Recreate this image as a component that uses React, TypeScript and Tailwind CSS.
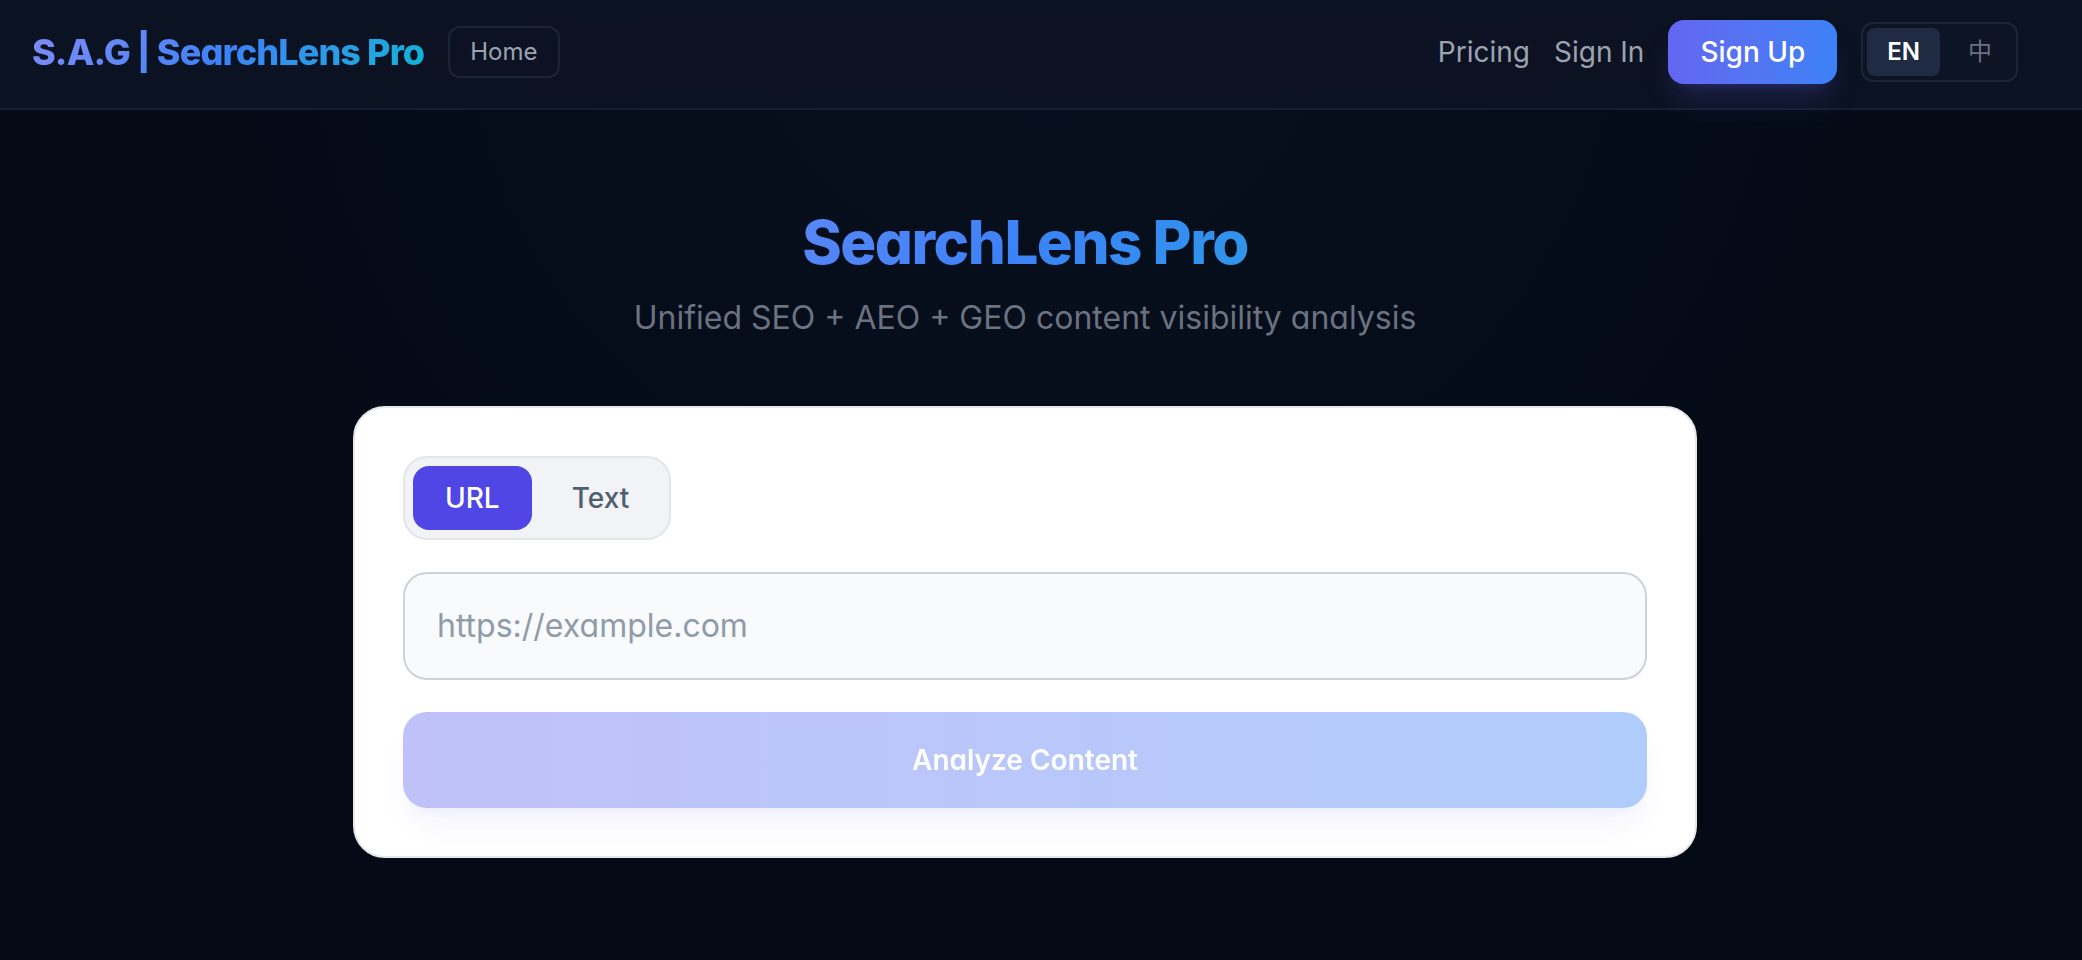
import { useState } from "react";
import clsx from "clsx";

const LANGS = [
    { id: "en", label: "EN" },
    { id: "zh", label: "中" },
];

const MODES = [
    { id: "url", label: "URL" },
    { id: "text", label: "Text" },
];

export default function App() {
    const [lang, setLang] = useState("en");
    const [mode, setMode] = useState("url");
    const [value, setValue] = useState("");

    return (
        <div className="min-h-screen bg-[#040b17] bg-[radial-gradient(ellipse_at_top,#080f1e_0%,#040b17_60%)] font-[Inter,'Noto_Sans_CJK_SC',sans-serif] [font-feature-settings:'cv11'] antialiased">
            {/* ─── Header ─── */}
            <header className="flex items-center justify-between border-b-2 border-[#161e36] bg-[#0b1221] bg-[radial-gradient(ellipse_at_center,#0e1225_0%,#0b1221_60%)] pt-5 pr-16 pb-6 pl-8">
                <div className="flex items-center gap-6">
                    <a
                        href="#"
                        className="bg-linear-135 from-[#818cf8] via-[#3b82f6] to-[#06b6d4] bg-clip-text text-[36px] leading-[56px] font-extrabold tracking-tight text-transparent"
                    >
                        S.A.G | SearchLens Pro
                    </a>
                    <a
                        href="#"
                        className="rounded-xl border-2 border-[#1b2536] px-5 py-2 text-2xl text-[#9ca3af]"
                    >
                        Home
                    </a>
                </div>

                <nav className="flex items-center gap-6 text-[28px] leading-10">
                    <a href="#" className="text-[#9ca3af]">Pricing</a>
                    <a href="#" className="text-[#9ca3af]">Sign In</a>
                    <a
                        href="#"
                        className="rounded-2xl bg-linear-to-r from-[#6366f1] to-[#3b82f6] px-8 py-3 font-medium text-white shadow-[0_20px_30px_-6px_#6366f133,0_8px_12px_-8px_#6366f133]"
                    >
                        Sign Up
                    </a>
                    <div className="flex gap-2 rounded-xl border-2 border-[#1b2536] bg-[#0d1423] p-1">
                        {LANGS.map((l) => (
                            <button
                                key={l.id}
                                onClick={() => setLang(l.id)}
                                className={clsx(
                                    "rounded-lg px-5 py-2 text-2xl",
                                    lang === l.id ? "bg-[#1e2b43] font-semibold text-white" : "text-[#6b7280]"
                                )}
                            >
                                {l.label}
                            </button>
                        ))}
                    </div>
                </nav>
            </header>

            <main className="py-24 pr-8">
                <div className="mx-auto max-w-[1344px]">
                    {/* ─── Hero ─── */}
                    <div className="mb-16 text-center">
                        <h1 className="mb-4 bg-linear-135 from-[#818cf8] via-[#3b82f6] to-[#06b6d4] bg-clip-text text-6xl leading-[72px] font-extrabold tracking-tight text-transparent">
                            SearchLens Pro
                        </h1>
                        <p className="text-[32px] leading-[48px] text-[#6b7280]">
                            Unified SEO + AEO + GEO content visibility analysis
                        </p>
                    </div>

                    {/* ─── Analyze form ─── */}
                    <form
                        onSubmit={(e) => e.preventDefault()}
                        className="flex flex-col items-start gap-8 rounded-4xl border-2 border-[#e5e7eb] bg-white p-12"
                    >
                        <div className="flex gap-2 rounded-3xl border-2 border-[#e2e5ea] bg-[#f1f3f7] p-2">
                            {MODES.map((m) => (
                                <button
                                    key={m.id}
                                    type="button"
                                    onClick={() => setMode(m.id)}
                                    className={clsx(
                                        "rounded-2xl px-8 py-3 text-[28px] leading-10 font-medium",
                                        mode === m.id ? "bg-[#4f46e5] text-white" : "text-[#4f5f6e]"
                                    )}
                                >
                                    {m.label}
                                </button>
                            ))}
                        </div>
                        <input
                            type="text"
                            aria-label="URL"
                            value={value}
                            onChange={(e) => setValue(e.target.value)}
                            placeholder="https://example.com"
                            className="w-full rounded-3xl border-2 border-[#cdd2d9] bg-[#f8fafc] px-8 py-7 text-[32px] leading-[48px] text-slate-900 outline-none placeholder:text-[#8f9ba8]"
                        />
                        <button
                            type="submit"
                            disabled={!value.trim()}
                            className="w-full rounded-3xl bg-linear-to-r from-[#6366f1] to-[#3b82f6] py-7 text-[28px] leading-10 font-semibold text-white shadow-[0_20px_30px_-6px_#6366f133,0_8px_12px_-8px_#6366f133] disabled:opacity-40"
                        >
                            Analyze Content
                        </button>
                    </form>
                </div>
            </main>
        </div>
    );
}
